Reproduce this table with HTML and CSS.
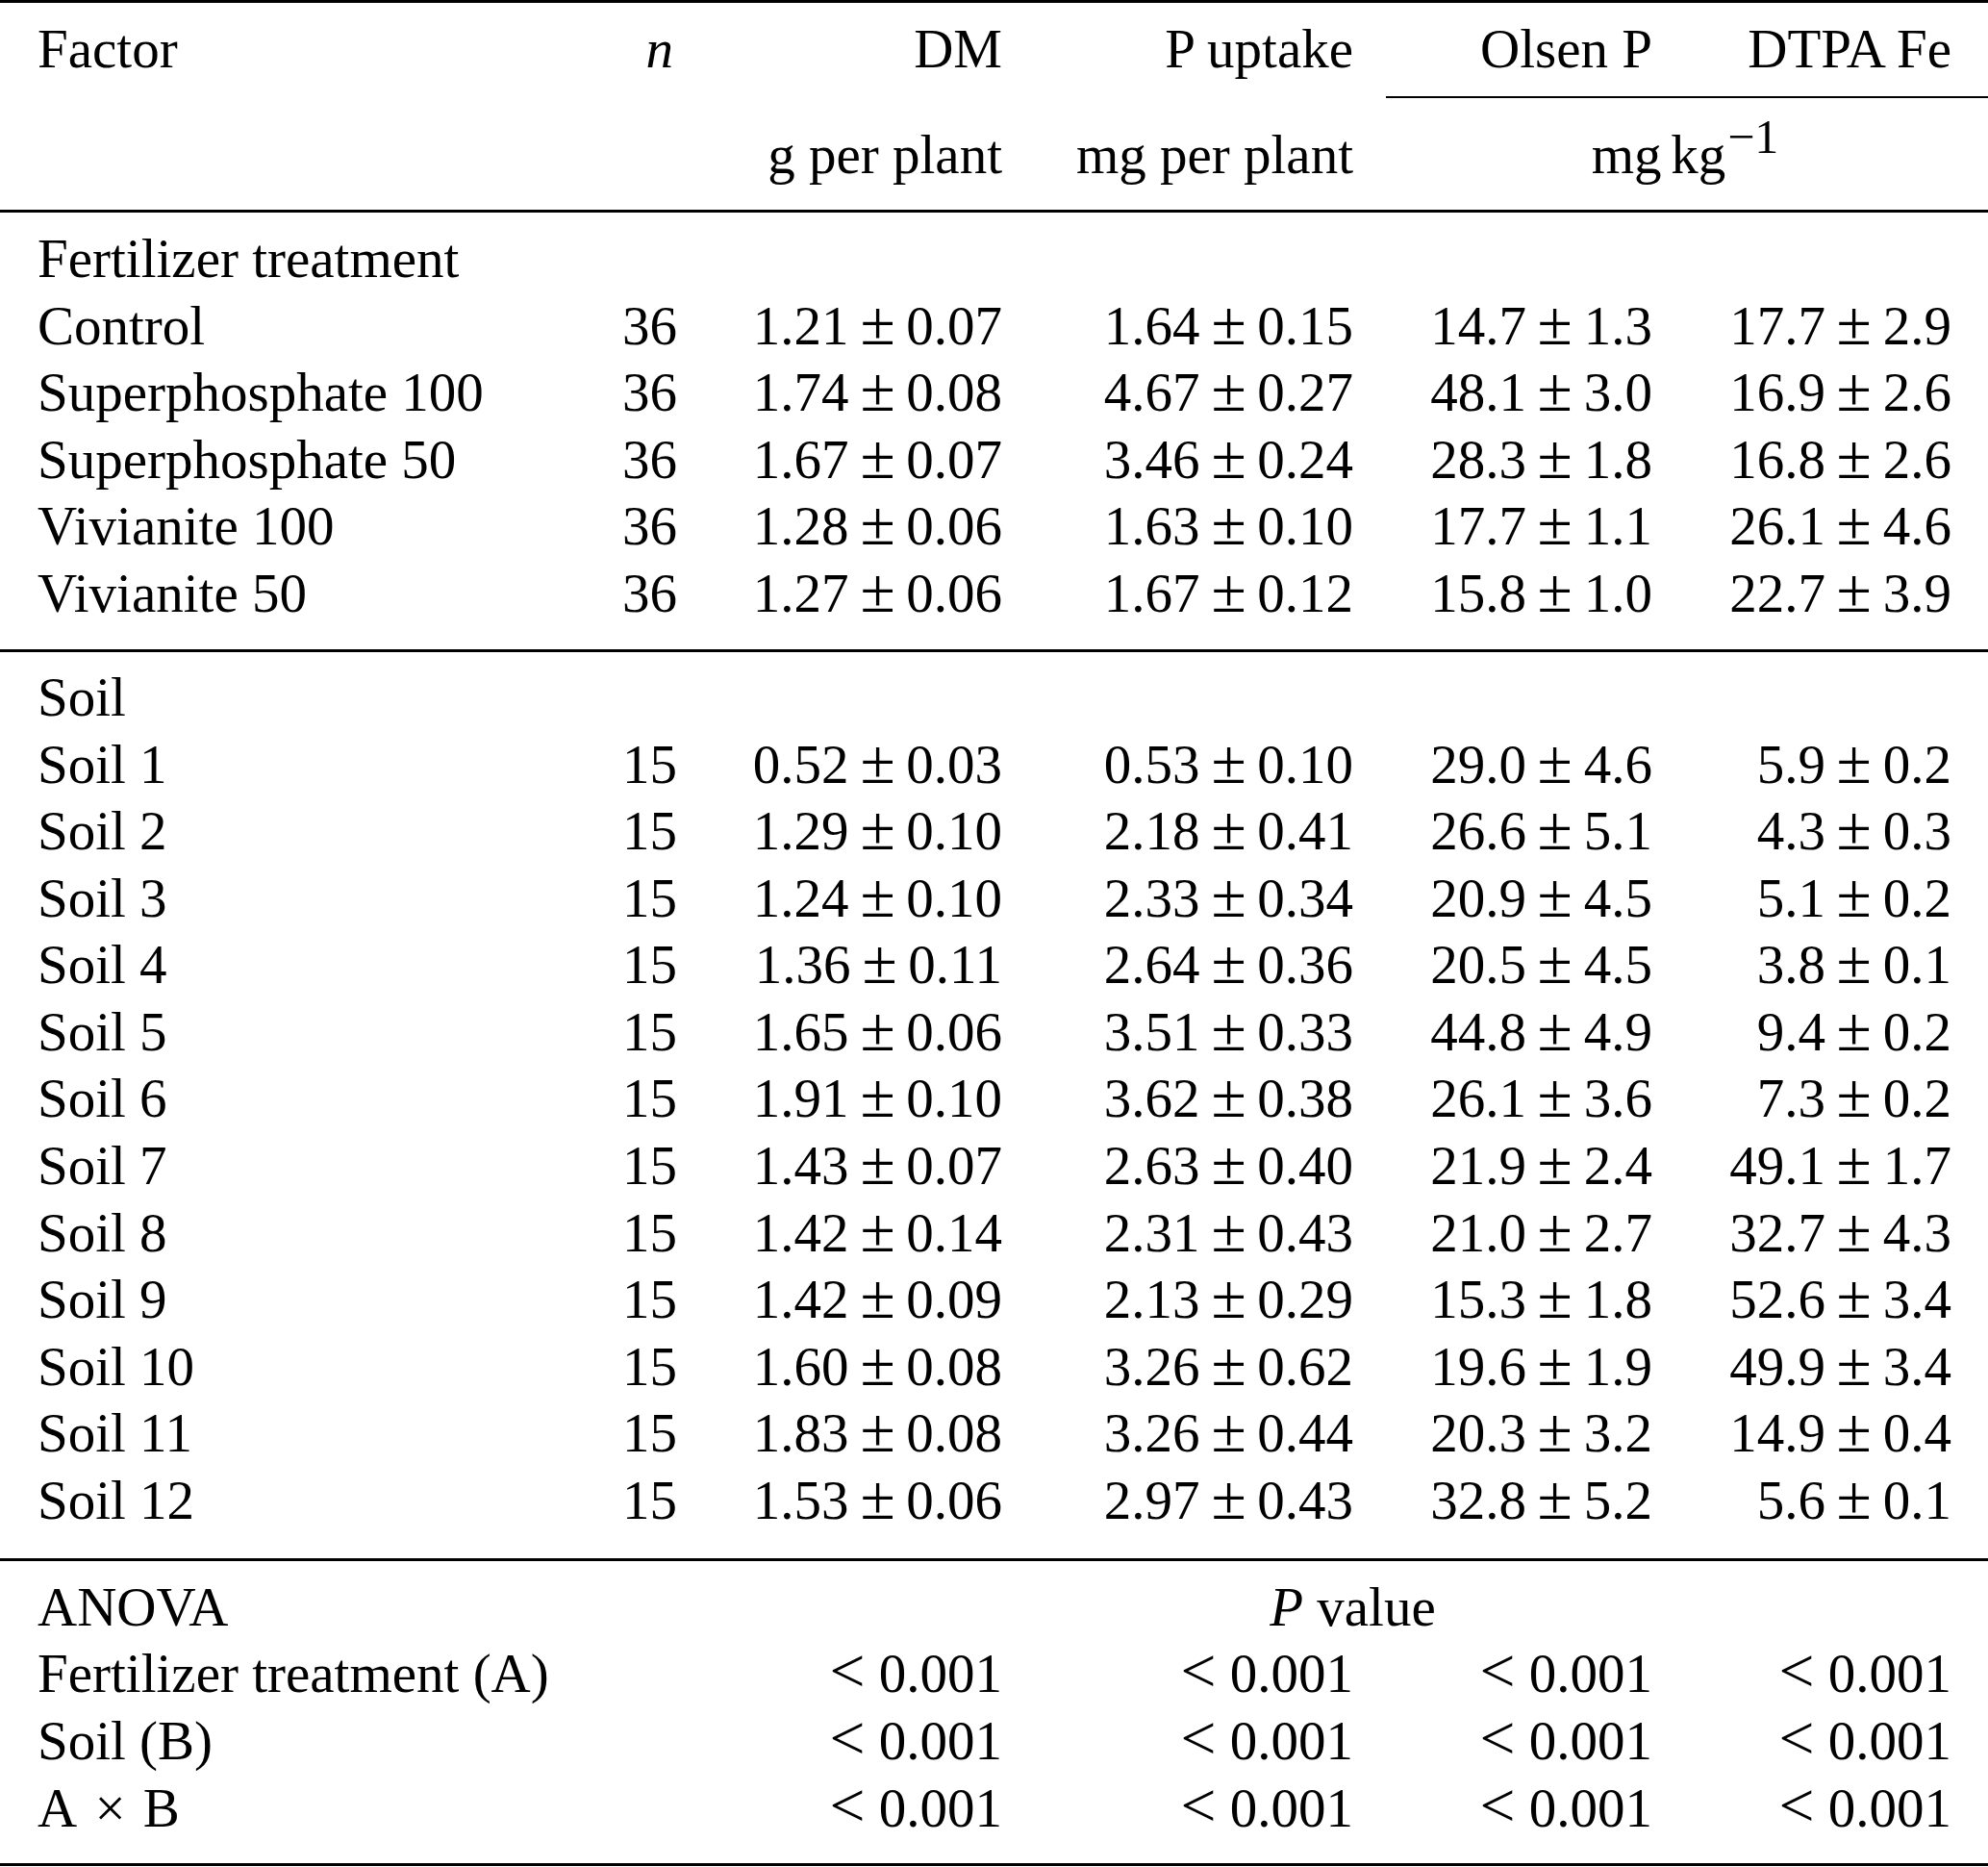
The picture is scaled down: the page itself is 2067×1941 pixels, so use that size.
FILE: index.html
```html
<!DOCTYPE html>
<html lang="en">
<head>
<meta charset="utf-8">
<title>Table</title>
<link rel="stylesheet" href="styles.css">
</head>
<body>
<div class="tbl">
  <div class="head">
    <div class="row hr1">
      <div class="c c1">Factor</div>
      <div class="c cn"><i>n</i></div>
      <div class="c">DM</div>
      <div class="c">P uptake</div>
      <div class="c">Olsen P</div>
      <div class="c c6">DTPA Fe</div>
    </div>
    <div class="row cmid"><div class="cmidline"></div></div>
    <div class="row hr2">
      <div class="c c1"></div>
      <div class="c"></div>
      <div class="c">g per plant</div>
      <div class="c">mg per plant</div>
      <div class="c c6 span56">mg<span class="kg">kg</span><span class="sup">−1</span></div>
    </div>
  </div>

  <div class="grp g1">
    <div class="row"><div class="c c1">Fertilizer treatment</div></div>
    <div class="row"><div class="c c1">Control</div><div class="c">36</div><div class="c">1.21<span class="pm">±</span>0.07</div><div class="c">1.64<span class="pm">±</span>0.15</div><div class="c">14.7<span class="pm">±</span>1.3</div><div class="c c6">17.7<span class="pm">±</span>2.9</div></div>
    <div class="row"><div class="c c1">Superphosphate 100</div><div class="c">36</div><div class="c">1.74<span class="pm">±</span>0.08</div><div class="c">4.67<span class="pm">±</span>0.27</div><div class="c">48.1<span class="pm">±</span>3.0</div><div class="c c6">16.9<span class="pm">±</span>2.6</div></div>
    <div class="row"><div class="c c1">Superphosphate 50</div><div class="c">36</div><div class="c">1.67<span class="pm">±</span>0.07</div><div class="c">3.46<span class="pm">±</span>0.24</div><div class="c">28.3<span class="pm">±</span>1.8</div><div class="c c6">16.8<span class="pm">±</span>2.6</div></div>
    <div class="row"><div class="c c1">Vivianite 100</div><div class="c">36</div><div class="c">1.28<span class="pm">±</span>0.06</div><div class="c">1.63<span class="pm">±</span>0.10</div><div class="c">17.7<span class="pm">±</span>1.1</div><div class="c c6">26.1<span class="pm">±</span>4.6</div></div>
    <div class="row"><div class="c c1">Vivianite 50</div><div class="c">36</div><div class="c">1.27<span class="pm">±</span>0.06</div><div class="c">1.67<span class="pm">±</span>0.12</div><div class="c">15.8<span class="pm">±</span>1.0</div><div class="c c6">22.7<span class="pm">±</span>3.9</div></div>
  </div>

  <div class="grp g2">
    <div class="row"><div class="c c1">Soil</div></div>
    <div class="row"><div class="c c1">Soil 1</div><div class="c">15</div><div class="c">0.52<span class="pm">±</span>0.03</div><div class="c">0.53<span class="pm">±</span>0.10</div><div class="c">29.0<span class="pm">±</span>4.6</div><div class="c c6">5.9<span class="pm">±</span>0.2</div></div>
    <div class="row"><div class="c c1">Soil 2</div><div class="c">15</div><div class="c">1.29<span class="pm">±</span>0.10</div><div class="c">2.18<span class="pm">±</span>0.41</div><div class="c">26.6<span class="pm">±</span>5.1</div><div class="c c6">4.3<span class="pm">±</span>0.3</div></div>
    <div class="row"><div class="c c1">Soil 3</div><div class="c">15</div><div class="c">1.24<span class="pm">±</span>0.10</div><div class="c">2.33<span class="pm">±</span>0.34</div><div class="c">20.9<span class="pm">±</span>4.5</div><div class="c c6">5.1<span class="pm">±</span>0.2</div></div>
    <div class="row"><div class="c c1">Soil 4</div><div class="c">15</div><div class="c">1.36<span class="pm">±</span>0.11</div><div class="c">2.64<span class="pm">±</span>0.36</div><div class="c">20.5<span class="pm">±</span>4.5</div><div class="c c6">3.8<span class="pm">±</span>0.1</div></div>
    <div class="row"><div class="c c1">Soil 5</div><div class="c">15</div><div class="c">1.65<span class="pm">±</span>0.06</div><div class="c">3.51<span class="pm">±</span>0.33</div><div class="c">44.8<span class="pm">±</span>4.9</div><div class="c c6">9.4<span class="pm">±</span>0.2</div></div>
    <div class="row"><div class="c c1">Soil 6</div><div class="c">15</div><div class="c">1.91<span class="pm">±</span>0.10</div><div class="c">3.62<span class="pm">±</span>0.38</div><div class="c">26.1<span class="pm">±</span>3.6</div><div class="c c6">7.3<span class="pm">±</span>0.2</div></div>
    <div class="row"><div class="c c1">Soil 7</div><div class="c">15</div><div class="c">1.43<span class="pm">±</span>0.07</div><div class="c">2.63<span class="pm">±</span>0.40</div><div class="c">21.9<span class="pm">±</span>2.4</div><div class="c c6">49.1<span class="pm">±</span>1.7</div></div>
    <div class="row"><div class="c c1">Soil 8</div><div class="c">15</div><div class="c">1.42<span class="pm">±</span>0.14</div><div class="c">2.31<span class="pm">±</span>0.43</div><div class="c">21.0<span class="pm">±</span>2.7</div><div class="c c6">32.7<span class="pm">±</span>4.3</div></div>
    <div class="row"><div class="c c1">Soil 9</div><div class="c">15</div><div class="c">1.42<span class="pm">±</span>0.09</div><div class="c">2.13<span class="pm">±</span>0.29</div><div class="c">15.3<span class="pm">±</span>1.8</div><div class="c c6">52.6<span class="pm">±</span>3.4</div></div>
    <div class="row"><div class="c c1">Soil 10</div><div class="c">15</div><div class="c">1.60<span class="pm">±</span>0.08</div><div class="c">3.26<span class="pm">±</span>0.62</div><div class="c">19.6<span class="pm">±</span>1.9</div><div class="c c6">49.9<span class="pm">±</span>3.4</div></div>
    <div class="row"><div class="c c1">Soil 11</div><div class="c">15</div><div class="c">1.83<span class="pm">±</span>0.08</div><div class="c">3.26<span class="pm">±</span>0.44</div><div class="c">20.3<span class="pm">±</span>3.2</div><div class="c c6">14.9<span class="pm">±</span>0.4</div></div>
    <div class="row"><div class="c c1">Soil 12</div><div class="c">15</div><div class="c">1.53<span class="pm">±</span>0.06</div><div class="c">2.97<span class="pm">±</span>0.43</div><div class="c">32.8<span class="pm">±</span>5.2</div><div class="c c6">5.6<span class="pm">±</span>0.1</div></div>
  </div>

  <div class="grp g3">
    <div class="row"><div class="c c1">ANOVA</div><div class="c"></div><div class="c c6 span36"><i>P</i> value</div></div>
    <div class="row"><div class="c c1">Fertilizer treatment (A)</div><div class="c"></div><div class="c"><span class="lt">&lt;</span>0.001</div><div class="c"><span class="lt">&lt;</span>0.001</div><div class="c"><span class="lt">&lt;</span>0.001</div><div class="c c6"><span class="lt">&lt;</span>0.001</div></div>
    <div class="row"><div class="c c1">Soil (B)</div><div class="c"></div><div class="c"><span class="lt">&lt;</span>0.001</div><div class="c"><span class="lt">&lt;</span>0.001</div><div class="c"><span class="lt">&lt;</span>0.001</div><div class="c c6"><span class="lt">&lt;</span>0.001</div></div>
    <div class="row"><div class="c c1">A<span class="times">×</span>B</div><div class="c"></div><div class="c"><span class="lt">&lt;</span>0.001</div><div class="c"><span class="lt">&lt;</span>0.001</div><div class="c"><span class="lt">&lt;</span>0.001</div><div class="c c6"><span class="lt">&lt;</span>0.001</div></div>
  </div>
</div>
</body>
</html>
```
FILE: styles.css
```css
* { box-sizing: border-box; }

html, body {
  margin: 0;
  padding: 0;
  background: #ffffff;
}

.tbl {
  width: 2067px;
  font-family: "Liberation Serif", "Times New Roman", serif;
  font-size: 57px;
  line-height: 69.6px;
  color: #000000;
  border-top: 3px solid #000000;
  border-bottom: 3px solid #000000;
}

.row {
  display: grid;
  grid-template-columns: 600px 138px 338px 365px 311px 315px;
  white-space: nowrap;
}

.c {
  padding: 0 34px;
  text-align: right;
}

.c1 {
  padding-left: 39px;
  padding-right: 0;
  text-align: left;
  overflow: visible;
}

.cn {
  padding-right: 38px;
}

.c6 {
  padding-right: 38px;
}

.hr1 {
  padding-top: 13px;
  padding-bottom: 14.4px;
}

.cmid {
  height: 2px;
}

.cmidline {
  grid-column: 5 / 7;
  height: 2px;
  background: #000000;
}

.hr2 {
  padding-top: 24px;
  padding-bottom: 22.4px;
  border-bottom: 3px solid #000000;
}

.span56 {
  grid-column: 5 / 7;
  text-align: center;
}

.span36 {
  grid-column: 3 / 7;
  text-align: center;
  padding-left: 46px;
}

.kg {
  margin-left: 0.17em;
}

.sup {
  font-size: 50px;
  line-height: 0;
  vertical-align: 21px;
  margin-left: 2px;
}

.times {
  margin: 0 0.32em;
}

.grp {
  border-bottom: 3px solid #000000;
}

.g1 {
  padding-top: 13px;
  padding-bottom: 23.4px;
}

.g2 {
  padding-top: 12px;
  padding-bottom: 25.2px;
}

.g3 {
  padding-top: 13px;
  padding-bottom: 22.6px;
  border-bottom: none;
}

.pm {
  display: inline-block;
  margin: 0 0.25em;
  transform: scale(1.16);
  transform-origin: 50% 75%;
}

.lt {
  display: inline-block;
  margin-right: 0.3em;
  transform: scale(1.15);
  transform-origin: 50% 75%;
}
```
